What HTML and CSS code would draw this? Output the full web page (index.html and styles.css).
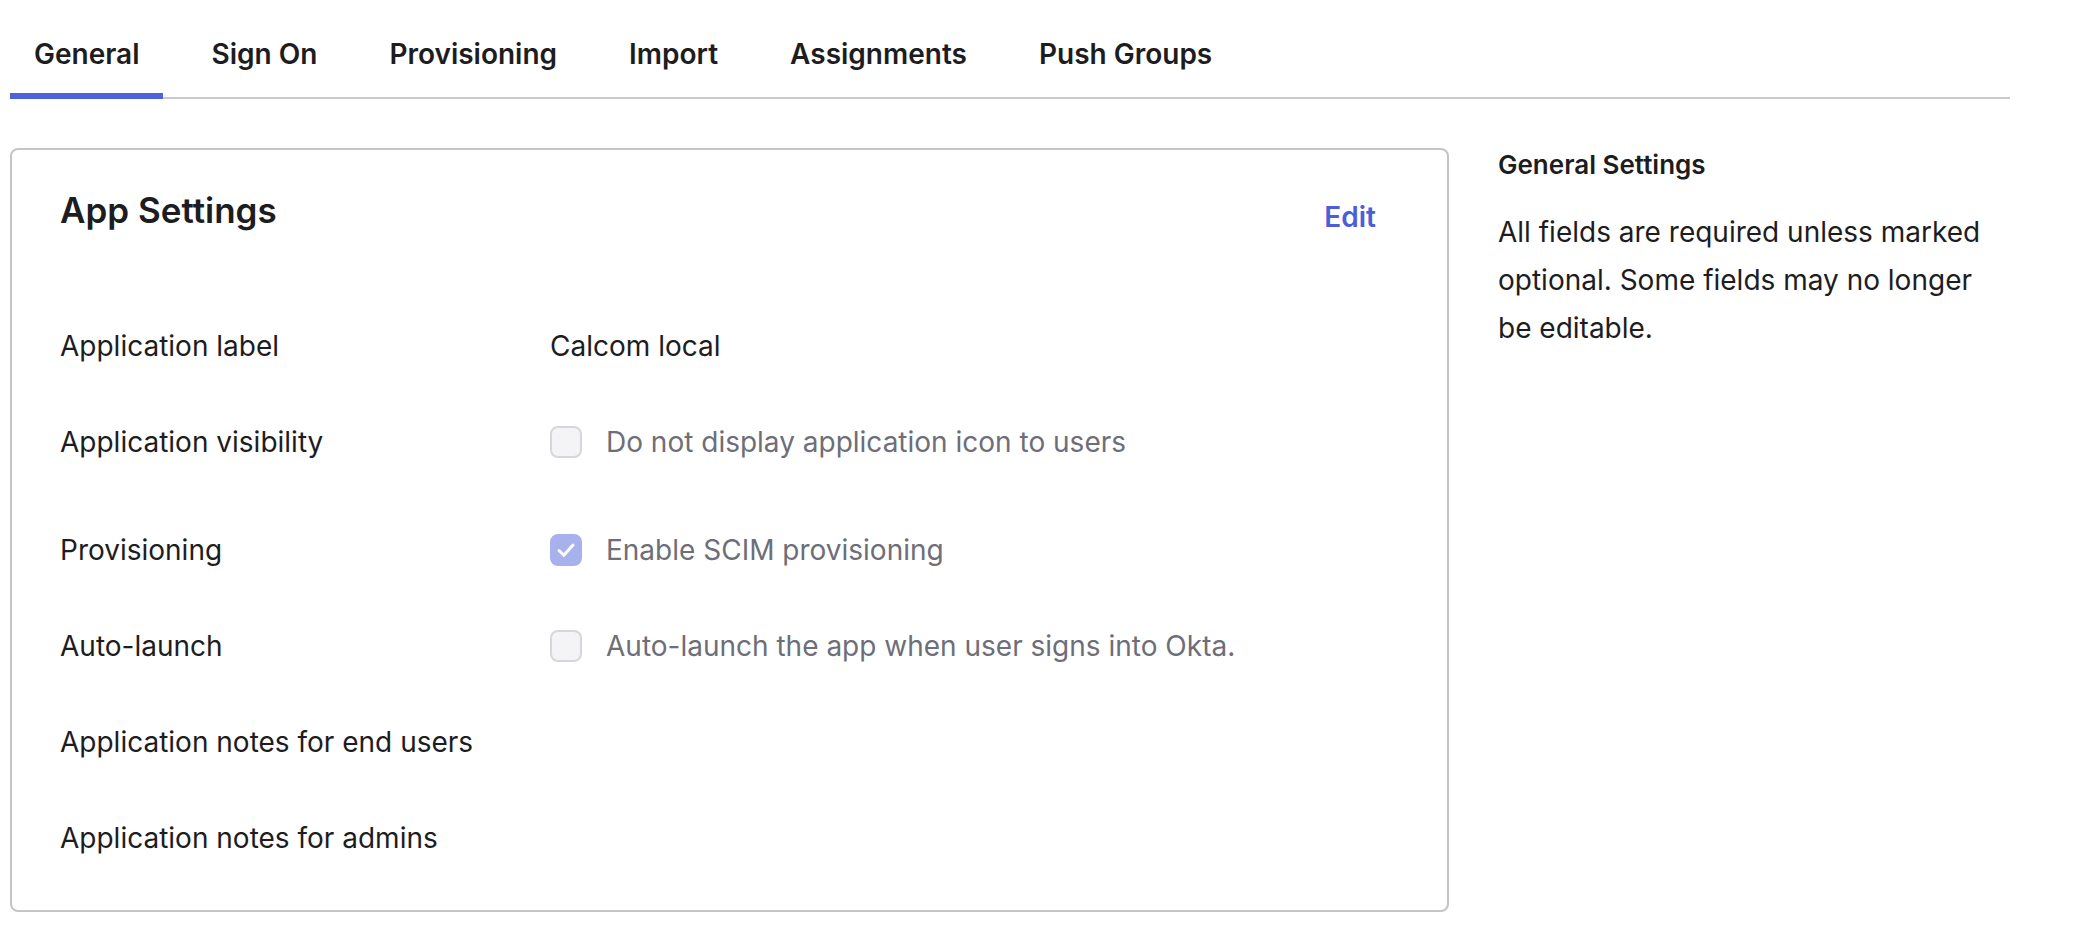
FILE: index.html
```html
<!DOCTYPE html>
<html lang="en">
<head>
<meta charset="utf-8">
<title>App Settings</title>
<link rel="stylesheet" href="styles.css">
</head>
<body>
<div class="page">
  <nav class="tabs">
    <div class="tab active">General</div>
    <div class="tab">Sign On</div>
    <div class="tab">Provisioning</div>
    <div class="tab">Import</div>
    <div class="tab">Assignments</div>
    <div class="tab">Push Groups</div>
  </nav>
  <div class="content">
    <section class="card">
      <div class="card-header">
        <h2 class="card-title">App Settings</h2>
        <a class="edit-link">Edit</a>
      </div>
      <div class="fields">
        <div class="field">
          <div class="field-label">Application label</div>
          <div class="field-value">Calcom local</div>
        </div>
        <div class="field field-spaced">
          <div class="field-label">Application visibility</div>
          <div class="field-value check-row">
            <span class="checkbox"></span>
            <span class="check-text">Do not display application icon to users</span>
          </div>
        </div>
        <div class="field">
          <div class="field-label">Provisioning</div>
          <div class="field-value check-row">
            <span class="checkbox checked">
              <svg viewBox="0 0 32 32" width="32" height="32"><path d="M9 16.5l4.8 4.8L23 11" fill="none" stroke="#fff" stroke-width="3" stroke-linecap="round" stroke-linejoin="round"/></svg>
            </span>
            <span class="check-text">Enable SCIM provisioning</span>
          </div>
        </div>
        <div class="field">
          <div class="field-label">Auto-launch</div>
          <div class="field-value check-row">
            <span class="checkbox"></span>
            <span class="check-text">Auto-launch the app when user signs into Okta.</span>
          </div>
        </div>
        <div class="field">
          <div class="field-label">Application notes for end users</div>
          <div class="field-value"></div>
        </div>
        <div class="field">
          <div class="field-label">Application notes for admins</div>
          <div class="field-value"></div>
        </div>
      </div>
    </section>
    <aside class="help">
      <h3 class="help-title">General Settings</h3>
      <p class="help-text">All fields are required unless marked optional. Some fields may no longer be editable.</p>
    </aside>
  </div>
</div>
</body>
</html>
```
FILE: styles.css
```css
* { box-sizing: border-box; }

body {
  margin: 0;
  background: #ffffff;
  color: #1d1d21;
  font-family: Inter, "Noto Sans", "DejaVu Sans", sans-serif;
}

.page {
  width: 2010px;
  padding-left: 10px;
}

.tabs {
  display: flex;
  gap: 24px;
  border-bottom: 2px solid #c9c9cd;
}

.tab {
  padding: 30px 24px 15px;
  font-size: 28px;
  line-height: 48px;
  font-weight: 600;
  color: #1d1d21;
  border-bottom: 6px solid transparent;
  margin-bottom: -2px;
}

.tab.active {
  border-bottom-color: #4e62d9;
}

.content {
  display: flex;
  align-items: flex-start;
  gap: 49px;
  margin-top: 49px;
}

.card {
  width: 1439px;
  flex: none;
  border: 2px solid #c4c4c9;
  border-radius: 8px;
  padding: 38px 48px 48px;
}

.card-header {
  display: flex;
  justify-content: space-between;
  align-items: flex-start;
  margin-bottom: 81px;
}

.card-title {
  margin: 0;
  font-size: 35px;
  line-height: 44px;
  font-weight: 600;
  color: #1d1d21;
}

.edit-link {
  margin-top: 5px;
  margin-right: 23px;
  font-size: 28px;
  line-height: 48px;
  font-weight: 600;
  color: #4b5ed8;
  cursor: pointer;
}

.fields {
  display: flex;
  flex-direction: column;
  gap: 48px;
}

.field {
  display: grid;
  grid-template-columns: 490px 1fr;
  min-height: 48px;
  font-size: 28px;
  line-height: 48px;
}

.field-spaced {
  margin-bottom: 12px;
}

.field-label,
.field-value {
  color: #1d1d21;
}

.check-row {
  display: flex;
  align-items: center;
  gap: 24px;
}

.checkbox {
  width: 32px;
  height: 32px;
  flex: none;
  border: 2px solid #d6d6db;
  border-radius: 8px;
  background: #f4f4f6;
  display: flex;
  align-items: center;
  justify-content: center;
}

.checkbox.checked {
  background: #a7b1ec;
  border-color: #a7b1ec;
}

.checkbox svg {
  display: block;
  flex: none;
}

.check-text {
  color: #6e6e78;
}

.help {
  width: 500px;
  padding-top: 1px;
}

.help-title {
  margin: 0;
  font-size: 26px;
  line-height: 32px;
  font-weight: 600;
  color: #1d1d21;
}

.help-text {
  margin: 27px 0 0;
  font-size: 28px;
  line-height: 48px;
  color: #1d1d21;
}
```
